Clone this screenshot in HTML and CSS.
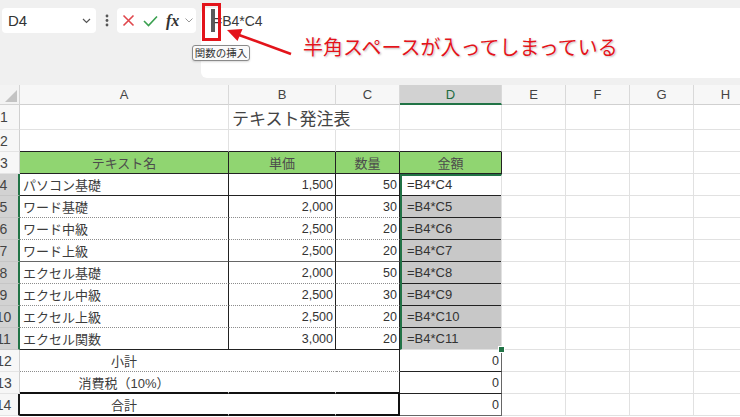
FILE: index.html
```html
<!DOCTYPE html>
<html lang="ja">
<head>
<meta charset="utf-8">
<link rel="stylesheet" href="styles.css">
</head>
<body>
<div class="app">
  <div class="toolbar">
    <div class="namebox"><span>D4</span><svg width="9" height="6" viewBox="0 0 9 6"><polyline points="1,1 4.5,4.5 8,1" fill="none" stroke="#555" stroke-width="1.2"/></svg></div>
    <div class="kebab"><svg width="4" height="13" viewBox="0 0 4 13"><circle cx="2" cy="2" r="1.4" fill="#555"/><circle cx="2" cy="6.5" r="1.4" fill="#555"/><circle cx="2" cy="11" r="1.4" fill="#555"/></svg></div>
    <div class="fxbox">
      <svg class="ic-x" width="13" height="13" viewBox="0 0 13 13"><path d="M1.5 1.5 L11.5 11.5 M11.5 1.5 L1.5 11.5" stroke="#e0474c" stroke-width="1.6" fill="none"/></svg>
      <svg class="ic-ok" width="15" height="12" viewBox="0 0 15 12"><polyline points="1,6 5.5,10.5 14,1.5" stroke="#3aa04f" stroke-width="1.6" fill="none"/></svg>
      <span class="fx">fx</span>
      <svg class="ic-chev" width="8" height="5" viewBox="0 0 8 5"><polyline points="0.5,0.5 4,4 7.5,0.5" fill="none" stroke="#999" stroke-width="1"/></svg>
    </div>
    <div class="formula"><span class="caret"></span><span class="ftext">=B4*C4</span></div>
  </div>

  <div class="sheet">
    <div class="corner"><span class="tri"></span></div>
    <div class="ch">A</div><div class="ch">B</div><div class="ch">C</div><div class="ch sel">D</div><div class="ch">E</div><div class="ch">F</div><div class="ch">G</div><div class="ch">H</div>

    <div class="rh">1</div>
    <div class="c"></div><div class="c title nr">テキスト発注表</div><div class="c"></div><div class="c"></div><div class="c"></div><div class="c"></div><div class="c"></div><div class="c"></div>

    <div class="rh">2</div>
    <div class="c bk"></div><div class="c bk"></div><div class="c bk"></div><div class="c bk"></div><div class="c"></div><div class="c"></div><div class="c"></div><div class="c"></div>

    <div class="rh">3</div>
    <div class="c hd">テキスト名</div><div class="c hd">単価</div><div class="c hd">数量</div><div class="c hd">金額</div><div class="c"></div><div class="c"></div><div class="c"></div><div class="c"></div>

    <div class="rh sel">4</div>
    <div class="c rk bk">パソコン基礎</div><div class="c rk bk num">1,500</div><div class="c rk bk num">50</div><div class="c rk bk f">=B4*C4</div><div class="c"></div><div class="c"></div><div class="c"></div><div class="c"></div>

    <div class="rh sel">5</div>
    <div class="c rk bd">ワード基礎</div><div class="c rk bd num">2,000</div><div class="c rk bd num">30</div><div class="c rk bk gr f">=B4*C5</div><div class="c"></div><div class="c"></div><div class="c"></div><div class="c"></div>

    <div class="rh sel">6</div>
    <div class="c rk bd">ワード中級</div><div class="c rk bd num">2,500</div><div class="c rk bd num">20</div><div class="c rk bk gr f">=B4*C6</div><div class="c"></div><div class="c"></div><div class="c"></div><div class="c"></div>

    <div class="rh sel">7</div>
    <div class="c rk bg">ワード上級</div><div class="c rk bg num">2,500</div><div class="c rk bg num">20</div><div class="c rk bk gr f">=B4*C7</div><div class="c"></div><div class="c"></div><div class="c"></div><div class="c"></div>

    <div class="rh sel">8</div>
    <div class="c rk bd">エクセル基礎</div><div class="c rk bd num">2,000</div><div class="c rk bd num">50</div><div class="c rk bk gr f">=B4*C8</div><div class="c"></div><div class="c"></div><div class="c"></div><div class="c"></div>

    <div class="rh sel">9</div>
    <div class="c rk bd">エクセル中級</div><div class="c rk bd num">2,500</div><div class="c rk bd num">30</div><div class="c rk bk gr f">=B4*C9</div><div class="c"></div><div class="c"></div><div class="c"></div><div class="c"></div>

    <div class="rh sel">10</div>
    <div class="c rk bd">エクセル上級</div><div class="c rk bd num">2,500</div><div class="c rk bd num">20</div><div class="c rk bk gr f">=B4*C10</div><div class="c"></div><div class="c"></div><div class="c"></div><div class="c"></div>

    <div class="rh sel">11</div>
    <div class="c rk bk">エクセル関数</div><div class="c rk bk num">3,000</div><div class="c rk bk num">20</div><div class="c rk bk gr f">=B4*C11</div><div class="c"></div><div class="c"></div><div class="c"></div><div class="c"></div>

    <div class="rh">12</div>
    <div class="c nr bd ctr">小計</div><div class="c nr bd"></div><div class="c rk bd"></div><div class="c rg bk num">0</div><div class="c"></div><div class="c"></div><div class="c"></div><div class="c"></div>

    <div class="rh">13</div>
    <div class="c nr bt ctr">消費税（10%）</div><div class="c nr bt"></div><div class="c rk bt"></div><div class="c rg bk num">0</div><div class="c"></div><div class="c"></div><div class="c"></div><div class="c"></div>

    <div class="rh box">14</div>
    <div class="c nr bt ctr">合計</div><div class="c nr bt"></div><div class="c rt bt"></div><div class="c rg bg num">0</div><div class="c"></div><div class="c"></div><div class="c"></div><div class="c"></div>

    <div class="selection"><span class="handle"></span></div>
  </div>

  <div class="mark"></div>
  <div class="tooltip">関数の挿入</div>
  <svg class="arrow" width="740" height="90" viewBox="0 0 740 90">
    <line x1="291" y1="54" x2="239" y2="35" stroke="#e3141b" stroke-width="2.6"/>
    <polygon points="227,30 242.5,29 237.5,41" fill="#e3141b"/>
  </svg>
  <div class="note">半角スペースが入ってしまっている</div>
</div>
</body>
</html>
```

FILE: styles.css
```css
html, body {
  margin: 0;
  padding: 0;
}
body {
  width: 740px;
  height: 417px;
  overflow: hidden;
  background: #ffffff;
  font-family: "Liberation Sans", "Noto Sans CJK JP", sans-serif;
}
.app {
  position: relative;
  width: 740px;
  height: 417px;
  overflow: hidden;
}

/* ---------- toolbar / formula bar ---------- */
.toolbar {
  display: flex;
  align-items: flex-start;
  box-sizing: border-box;
  height: 85px;
  padding: 8px 0 0 2px;
  background: #f0f0f0;
}
.namebox {
  box-sizing: border-box;
  width: 94px;
  height: 25px;
  background: #ffffff;
  border-radius: 4px;
  display: flex;
  align-items: center;
  justify-content: space-between;
  padding: 0 5px 0 6px;
  font-size: 15px;
  color: #333;
}
.kebab {
  width: 21px;
  height: 25px;
  display: flex;
  align-items: center;
  justify-content: center;
}
.fxbox {
  box-sizing: border-box;
  width: 79px;
  height: 25px;
  background: #ffffff;
  border-radius: 4px;
  display: flex;
  align-items: center;
  padding-left: 5px;
}
.ic-ok { margin-left: 8px; }
.fx {
  margin-left: 8px;
  font-family: "Liberation Serif", serif;
  font-style: italic;
  font-weight: bold;
  font-size: 16px;
  color: #333;
  line-height: 1;
}
.ic-chev { margin-left: 6px; }
.formula {
  flex: 1;
  height: 70px;
  margin-left: 5px;
  background: #ffffff;
  border-radius: 6px 0 0 6px;
  display: flex;
  align-items: flex-start;
  padding-left: 10px;
}
.caret {
  width: 4px;
  height: 23px;
  margin-top: 1px;
  background: #5a5a5a;
}
.ftext {
  margin-left: -1px;
  margin-top: 5px;
  font-size: 14px;
  color: #3a3a3a;
  line-height: 16px;
}

/* ---------- sheet grid ---------- */
.sheet {
  position: relative;
  display: grid;
  grid-template-columns: 31px 209px 107px 64px 102px 64px 64px 64px 64px;
  grid-template-rows: 20px 25px repeat(13, 22px);
  width: 769px;
  margin-left: -11px;
  background: #ffffff;
}
.sheet > div {
  box-sizing: border-box;
  border-right: 1px solid #e1e1e1;
  border-bottom: 1px solid #e1e1e1;
  display: flex;
  align-items: center;
  white-space: nowrap;
  font-size: 13px;
  color: #3c3c3c;
  padding: 0 3px;
}
.sheet > .corner {
  background: #f3f3f3;
  border-right-color: #d4d4d4;
  border-bottom-color: #d4d4d4;
  justify-content: flex-end;
  align-items: flex-end;
  padding: 0 2px 2px 0;
}
.tri {
  width: 12px;
  height: 12px;
  background: #c3c3c3;
  clip-path: polygon(100% 0, 100% 100%, 0 100%);
}
.sheet > .ch {
  justify-content: center;
  background: #f7f7f7;
  border-right-color: #d9d9d9;
  border-bottom-color: #d0d0d0;
  color: #444;
}
.sheet > .ch.sel {
  background: #d2d2d2;
  border-bottom: 2px solid #217346;
  color: #1e6b40;
}
.sheet > .rh {
  justify-content: center;
  background: #f7f7f7;
  border-right-color: #d0d0d0;
  border-bottom-color: #e4e4e4;
  color: #444;
  font-size: 14px;
  padding: 0;
}
.sheet > .rh.sel {
  background: #d2d2d2;
  border-right: 2px solid #217346;
  border-bottom-color: #c6c6c6;
}
.sheet > .rh.box {
  border-right: 2px solid #1a1a1a;
}

.sheet > .title {
  font-size: 17px;
  color: #444;
  overflow: visible;
}
.sheet > .hd {
  justify-content: center;
  background: #90d571;
  color: #4c4c4c;
  border-right: 1px solid #222;
  border-bottom: 1px solid #222;
}
.sheet > .bk { border-bottom: 1px solid #222; }
.sheet > .bd { border-bottom: 1px dotted #8c8c8c; }
.sheet > .bg { border-bottom: 1px solid #666; }
.sheet > .bt { border-bottom: 2px solid #111; }
.sheet > .rk { border-right: 1px solid #222; }
.sheet > .rg { border-right: 1px solid #666; }
.sheet > .rt { border-right: 2px solid #111; }
.sheet > .nr { border-right-color: transparent; }
.sheet > .num {
  justify-content: flex-end;
  padding-right: 2px;
  font-size: 12.5px;
  color: #333;
}
.sheet > .ctr { justify-content: center; }
.sheet > .gr { background: #c8c8c8; }
.sheet > .f {
  padding-left: 7px;
  color: #333;
}

.selection {
  position: absolute;
  left: 411px;
  top: 89px;
  width: 102px;
  height: 176px;
  box-sizing: border-box;
  border: 2px solid #217346;
  pointer-events: none;
}
.handle {
  position: absolute;
  right: -4px;
  bottom: -4px;
  width: 5px;
  height: 5px;
  background: #217346;
  border: 1px solid #ffffff;
}

/* ---------- annotations ---------- */
.mark {
  position: absolute;
  left: 202px;
  top: 3px;
  width: 19px;
  height: 38px;
  box-sizing: border-box;
  border: 3px solid #e3141b;
}
.tooltip {
  position: absolute;
  left: 192px;
  top: 45px;
  box-sizing: border-box;
  width: 58px;
  height: 16px;
  border: 1px solid #8a8a8a;
  border-radius: 3px;
  background: #fafafa;
  font-size: 10.5px;
  line-height: 14px;
  color: #333;
  text-align: center;
  font-family: "Noto Sans CJK JP", sans-serif;
  box-shadow: 0 1px 2px rgba(0,0,0,0.15);
}
.arrow {
  position: absolute;
  left: 0;
  top: 0;
  pointer-events: none;
}
.note {
  position: absolute;
  left: 303px;
  top: 33px;
  font-family: "Noto Sans CJK JP", sans-serif;
  font-size: 20px;
  line-height: 28px;
  color: #e3141b;
  white-space: nowrap;
  text-shadow: 0 0 1px #fff, 1px 1px 2px rgba(0,0,0,0.25);
}
```
